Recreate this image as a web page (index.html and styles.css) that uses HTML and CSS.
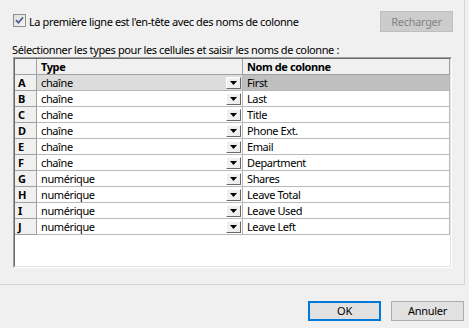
FILE: index.html
```html
<!DOCTYPE html>
<html lang="fr">
<head>
  <meta charset="UTF-8" />
  <title>Importer des colonnes</title>
  <link rel="stylesheet" href="styles.css">
</head>
<body>

  <div class="panel">
    <div class="top-row">
      <label class="check">
        <span class="box">
          <svg width="13" height="13" viewBox="0 0 13 13">
            <defs>
              <linearGradient id="boxfill" x1="0" y1="0" x2="1" y2="1">
                <stop offset="0" stop-color="#dcdcdc" />
                <stop offset="1" stop-color="#f7f7f7" />
              </linearGradient>
            </defs>
            <rect x="0.5" y="0.5" width="12" height="12" fill="url(#boxfill)" stroke="#8e8f8f" />
            <path d="M3 6.2 L5.4 8.8 L10 3.4" fill="none" stroke="#4a5d8f" stroke-width="1.7" />
          </svg>
        </span>
        La première ligne est l'en-tête avec des noms de colonne
      </label>
      <button class="btn btn-disabled" disabled>Recharger</button>
    </div>

    <p class="hint">Sélectionner les types pour les cellules et saisir les noms de colonne :</p>

    <div class="grid">
      <div class="grid-inner">
        <table class="cols">
          <colgroup>
            <col class="col-head" />
            <col class="col-type" />
            <col class="col-name" />
          </colgroup>
          <thead>
            <tr>
              <th class="corner"></th>
              <th>Type</th>
              <th>Nom de colonne</th>
            </tr>
          </thead>
          <tbody id="rows"></tbody>
        </table>
      </div>
    </div>
  </div>

  <div class="footer">
    <button class="btn btn-default">OK</button>
    <button class="btn">Annuler</button>
  </div>

  <script>
    const columns = [
      ['A', 'chaîne', 'First'],
      ['B', 'chaîne', 'Last'],
      ['C', 'chaîne', 'Title'],
      ['D', 'chaîne', 'Phone Ext.'],
      ['E', 'chaîne', 'Email'],
      ['F', 'chaîne', 'Department'],
      ['G', 'numérique', 'Shares'],
      ['H', 'numérique', 'Leave Total'],
      ['I', 'numérique', 'Leave Used'],
      ['J', 'numérique', 'Leave Left']
    ];

    const body = document.getElementById('rows');
    columns.forEach(([letter, type, name], i) => {
      const tr = document.createElement('tr');
      if (i === 0) tr.className = 'selected';
      tr.innerHTML =
        '<th class="row-head">' + letter + '</th>' +
        '<td class="type-cell"><div class="combo"><span>' + type + '</span>' +
        '<span class="drop"><svg width="7" height="4" viewBox="0 0 7 4"><path d="M0 0h7L3.5 4z" fill="#000"/></svg></span></div></td>' +
        '<td class="name-cell">' + name + '</td>';
      body.appendChild(tr);
    });
  </script>
</body>
</html>
```

FILE: styles.css
```css
* {
  box-sizing: border-box;
}

body {
  margin: 0;
  width: 469px;
  height: 328px;
  background: #f0f0f0;
  font-family: 'Noto Sans', sans-serif;
  font-size: 11px;
  letter-spacing: -0.4px;
  color: #000;
  overflow: hidden;
}

.panel {
  width: 465px;
  height: 285px;
  border-right: 1px solid #d5d5d5;
  border-bottom: 1px solid #d5d5d5;
  padding: 11px 11px 0 12px;
}

.top-row {
  display: flex;
  justify-content: space-between;
  align-items: center;
  height: 21px;
}

.check {
  display: flex;
  align-items: center;
  padding-left: 1px;
  line-height: 15px;
}

.box {
  display: block;
  width: 13px;
  height: 13px;
  margin-right: 3px;
  margin-bottom: 2px;
}

.box svg {
  display: block;
}

.btn {
  width: 73px;
  height: 20px;
  padding: 0;
  font-family: 'Noto Sans', sans-serif;
  font-size: 11px;
  letter-spacing: -0.3px;
  line-height: 16px;
  color: #000;
  background: #e1e1e1;
  border: 1px solid #adadad;
}

.btn-disabled {
  height: 21px;
  background: #cccccc;
  border-color: #bfbfbf;
  color: #838383;
}

.btn-default {
  border: 2px solid #0078d7;
}

.hint {
  margin: 10px 0 0;
  line-height: 15px;
}

.grid {
  width: 439px;
  height: 211px;
  margin-left: 1px;
  background: #fff;
  border-top: 1px solid #a0a0a0;
  border-left: 1px solid #a0a0a0;
  border-right: 1px solid #fff;
  border-bottom: 1px solid #fff;
}

.grid-inner {
  height: 100%;
  border-top: 1px solid #696969;
  border-left: 1px solid #696969;
  border-right: 1px solid #e3e3e3;
  border-bottom: 1px solid #e3e3e3;
}

.cols {
  width: 435px;
  table-layout: fixed;
  border-collapse: separate;
  border-spacing: 0;
}

.col-head { width: 22px; }
.col-type { width: 206px; }
.col-name { width: 207px; }

.cols th,
.cols td {
  height: 15px;
  padding: 0 0 0 4px;
  line-height: 15px;
  text-align: left;
  white-space: nowrap;
  border-right: 1px solid #a0a0a0;
  border-bottom: 1px solid #a0a0a0;
}

.cols thead th {
  background: #f0f0f0;
  font-weight: bold;
}

.cols .row-head {
  background: #f0f0f0;
  font-weight: bold;
  padding-left: 3px;
}

.cols td {
  border-color: #b9b9b9;
}

.selected .type-cell {
  background: #dcdcdc;
}

.selected .name-cell {
  background: #bfbfbf;
}

.combo {
  display: flex;
  justify-content: space-between;
  align-items: center;
  padding-right: 1px;
}

.drop {
  display: flex;
  justify-content: center;
  align-items: center;
  width: 15px;
  height: 12px;
  background: #f0f0f0;
  border: 1px solid;
  border-color: #fff #696969 #696969 #fff;
}

.drop svg {
  display: block;
}

.footer {
  display: flex;
  justify-content: flex-end;
  gap: 10px;
  padding: 16px 5px 0 0;
}
```
